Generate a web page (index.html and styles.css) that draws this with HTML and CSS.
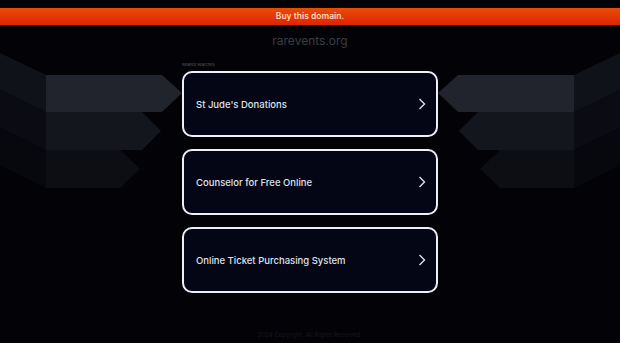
FILE: index.html
```html
<!DOCTYPE html>
<html lang="en">
  <head>
    <meta charset="UTF-8" />
    <meta name="viewport" content="width=device-width, initial-scale=1.0" />
    <title>rarevents.org</title>
    <link rel="stylesheet" href="styles.css">
  </head>
  <body>
    <div class="buy-bar">Buy this domain.</div>
    <div class="domain">rarevents.org</div>

    <div class="main">
      <div class="side">
        <svg class="wings" width="182" height="140" viewBox="0 0 182 140">
          <polygon points="0,0 46,22 46,59 0,37" fill="#10121a" />
          <polygon points="0,37 46,59 46,97 0,75" fill="#0b0c13" />
          <polygon points="0,75 46,97 46,135 0,112" fill="#07080d" />
          <polygon points="46,22 162,22 182,40 162,59 46,59" fill="#21232d" />
          <polygon points="46,59 142,59 161,78 142,97 46,97" fill="#14161d" />
          <polygon points="46,97 120,97 140,116 120,135 46,135" fill="#0d0e14" />
        </svg>
      </div>

      <div class="searches">
        <div class="searches-title">Related searches</div>
        <a class="search-card" href="#">
          <span>St Jude's Donations</span>
          <svg class="chevron" width="8" height="12" viewBox="0 0 8 12">
            <path d="M1.5 1 L6.5 6 L1.5 11" />
          </svg>
        </a>
        <a class="search-card" href="#">
          <span>Counselor for Free Online</span>
          <svg class="chevron" width="8" height="12" viewBox="0 0 8 12">
            <path d="M1.5 1 L6.5 6 L1.5 11" />
          </svg>
        </a>
        <a class="search-card" href="#">
          <span>Online Ticket Purchasing System</span>
          <svg class="chevron" width="8" height="12" viewBox="0 0 8 12">
            <path d="M1.5 1 L6.5 6 L1.5 11" />
          </svg>
        </a>
      </div>

      <div class="side side-right">
        <svg class="wings" width="182" height="140" viewBox="0 0 182 140">
          <polygon points="0,0 46,22 46,59 0,37" fill="#10121a" />
          <polygon points="0,37 46,59 46,97 0,75" fill="#0b0c13" />
          <polygon points="0,75 46,97 46,135 0,112" fill="#07080d" />
          <polygon points="46,22 162,22 182,40 162,59 46,59" fill="#21232d" />
          <polygon points="46,59 142,59 161,78 142,97 46,97" fill="#14161d" />
          <polygon points="46,97 120,97 140,116 120,135 46,135" fill="#0d0e14" />
        </svg>
      </div>
    </div>

    <div class="footer">2024 Copyright. All Rights Reserved.</div>
  </body>
</html>
```

FILE: styles.css
```css
body {
  margin: 0;
  background-color: #030307;
  font-family: Inter, "Noto Sans", sans-serif;
  height: 343px;
  overflow: hidden;
}
.buy-bar {
  margin-top: 8px;
  height: 17px;
  line-height: 17px;
  background: linear-gradient(#e94c08, #df2400);
  color: #ffd9bd;
  font-size: 8.5px;
  font-weight: 600;
  text-align: center;
}
.domain {
  padding-top: 4px;
  height: 24px;
  line-height: 24px;
  text-align: center;
  font-size: 12px;
  color: #3a3d45;
}
.main {
  display: flex;
}
.side {
  flex: 1;
  display: flex;
}
.side-right {
  transform: scaleX(-1);
}
.wings {
  display: block;
}
.searches {
  width: 256px;
  display: flex;
  flex-direction: column;
}
.searches-title {
  margin-top: 9px;
  height: 9px;
  font-size: 4px;
  line-height: 6px;
  color: #5a5d66;
}
.search-card {
  box-sizing: border-box;
  height: 66px;
  margin-bottom: 12px;
  border: 2px solid #eef0f6;
  border-radius: 10px;
  background-color: #040615;
  display: flex;
  align-items: center;
  justify-content: space-between;
  padding: 0 10px 0 12px;
  text-decoration: none;
  color: #dfe2ea;
  font-size: 9.5px;
  font-weight: 500;
}
.chevron {
  fill: none;
  stroke: #dfe2ea;
  stroke-width: 1.4;
}
.footer {
  margin-top: 26px;
  line-height: 8px;
  text-align: center;
  font-size: 6px;
  color: #16181e;
}
```
